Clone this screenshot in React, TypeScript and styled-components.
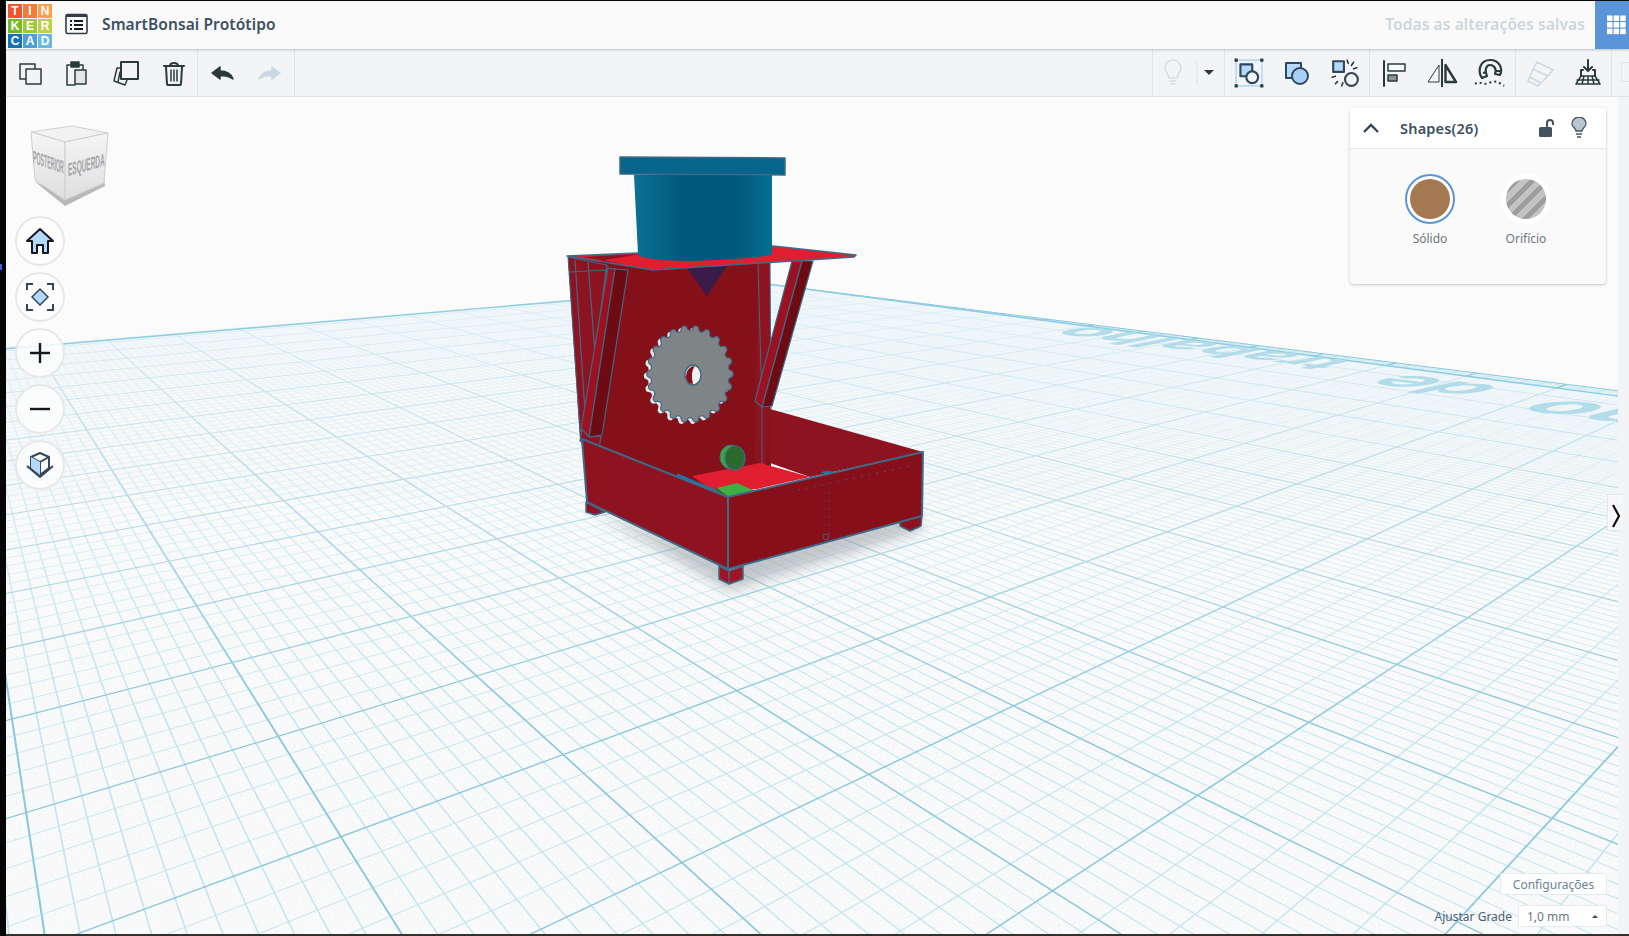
import styled, { createGlobalStyle } from "styled-components"
import type { ReactNode } from "react"

const GlobalStyle = createGlobalStyle`
    html, body {
        margin: 0;
        padding: 0;
        height: 100%;
        overflow: hidden;
        background: #000;
        font-family: "Noto Sans", "Open Sans", sans-serif;
    }
    #root {
        height: 100%;
    }
`

const Frame = styled.div`
    display: flex;
    width: 1629px;
    height: 936px;
    padding-top: 1px;
    box-sizing: border-box;
    background: #050505;
`

const LeftRail = styled.div`
    position: relative;
    flex: 0 0 6px;
`

const RailDot = styled.span`
    position: absolute;
    left: 0;
    top: 263px;
    width: 2px;
    height: 6px;
    background: #3f5fe0;
`

const Main = styled.div`
    flex: 1;
    display: flex;
    flex-direction: column;
    min-width: 0;
`

const Header = styled.header`
    flex: 0 0 48px;
    display: flex;
    align-items: center;
    background: #fafafa;
    box-shadow: 0 1px 2px rgba(120, 130, 140, 0.45);
    position: relative;
    z-index: 2;
`

const Logo = styled.div`
    display: grid;
    grid-template-columns: repeat(3, 14px);
    grid-template-rows: repeat(3, 14px);
    gap: 1px;
    margin: 2px 0 0 2px;
`

const LogoCell = styled.span<{ $bg: string }>`
    display: flex;
    align-items: center;
    justify-content: center;
    background: ${p => p.$bg};
    color: #fff;
    font: 700 12px "Liberation Sans", sans-serif;
`

const ListButton = styled.div`
    display: flex;
    margin: 0 0 2px 13px;
`

const ProjectName = styled.h1`
    margin: 0 0 3px 13px;
    font: 600 15.5px "Noto Sans", sans-serif;
    letter-spacing: 0.1px;
    color: #3c5064;
`

const SavedNote = styled.span`
    margin: 0 10px 3px auto;
    font: 600 15.5px "Noto Sans", sans-serif;
    letter-spacing: 0.1px;
    color: #cdd6de;
`

const Waffle = styled.div`
    flex: 0 0 34px;
    align-self: stretch;
    box-sizing: border-box;
    display: flex;
    align-items: center;
    padding-left: 12px;
    background: #5b95d9;
    overflow: hidden;
`

const Toolbar = styled.div`
    flex: 0 0 48px;
    display: flex;
    background: #f3f4f6;
    border-bottom: 1px solid #dfe2e6;
    box-sizing: border-box;
`

const ToolGroup = styled.div<{ $width?: number }>`
    display: flex;
    align-items: center;
    flex: 0 0 auto;
    height: 100%;
    width: ${p => (p.$width ? `${p.$width}px` : "auto")};
    border-right: 1px solid #e2e5e8;
    box-sizing: border-box;
`

const ToolButton = styled.div<{ $width?: number }>`
    flex: 0 0 ${p => p.$width ?? 48}px;
    display: flex;
    align-items: center;
    justify-content: center;
`

const ToolSpacer = styled.div`
    flex: 1;
    height: 100%;
    border-right: 1px solid #e2e5e8;
`

const CutoffButton = styled.div`
    flex: 0 0 8px;
    height: 20px;
    margin: 13px 0 0 9px;
    border: 1px solid #e3e5e8;
    border-right: 0;
    box-sizing: border-box;
    border-radius: 3px 0 0 3px;
`

const WorkArea = styled.div`
    position: relative;
    flex: 1;
    display: flex;
    min-height: 0;
`

const Canvas = styled.div`
    position: relative;
    flex: 1;
    overflow: hidden;
    background: #fbfbfb;
`

const Strip = styled.div`
    flex: 0 0 11px;
    background: #f3f4f6;
`

const BottomBar = styled.div`
    flex: 0 0 2px;
    background: #35302c;
`

const SceneSvg = styled.svg`
    display: block;
    width: 1612px;
    height: 837px;
`

const NavStack = styled.div`
    position: absolute;
    left: 9px;
    top: 119px;
    display: flex;
    flex-direction: column;
    gap: 6px;
`

const NavButton = styled.div`
    width: 50px;
    height: 50px;
    box-sizing: border-box;
    display: flex;
    align-items: center;
    justify-content: center;
    border-radius: 50%;
    border: 2px solid #e7e8ea;
    background: rgba(252, 252, 252, 0.82);
`

const ViewCube = styled.svg`
    position: absolute;
    left: 22px;
    top: 26px;
`

const ShapePanel = styled.section`
    position: absolute;
    left: 1344px;
    top: 11px;
    width: 256px;
    height: 176px;
    border-radius: 4px;
    background: #fafafa;
    box-shadow: 0 1px 3px rgba(110, 120, 135, 0.4);
    overflow: hidden;
`

const PanelHead = styled.div`
    display: flex;
    align-items: center;
    height: 40px;
    padding: 0 19px 0 13px;
    background: #fff;
    border-bottom: 1px solid #e4e6e9;
`

const PanelTitle = styled.span`
    margin-left: 21px;
    font: 600 14.5px "Noto Sans", sans-serif;
    letter-spacing: 0.2px;
    color: #3c4f63;
`

const PanelIcons = styled.div`
    margin-left: auto;
    display: flex;
    align-items: center;
    gap: 17px;
`

const ShapeOptions = styled.div`
    display: flex;
    justify-content: center;
    gap: 42px;
    padding: 25px 0 0;
`

const ShapeOption = styled.div`
    width: 54px;
    display: flex;
    flex-direction: column;
    align-items: center;
    gap: 6px;
`

const Swatch = styled.div<{ $active?: boolean }>`
    width: 50px;
    height: 50px;
    box-sizing: border-box;
    padding: 3px;
    border-radius: 50%;
    background: #fff;
    border: 2px solid ${p => (p.$active ? "#5b95d9" : "#fff")};
`

const SwatchFill = styled.div<{ $hole?: boolean }>`
    width: 100%;
    height: 100%;
    border-radius: 50%;
    background: ${p =>
        p.$hole
            ? "repeating-linear-gradient(135deg, #c3c3c3 0 6px, #9d9d9d 6px 11px)"
            : "#a47850"};
`

const SwatchLabel = styled.span`
    font: 400 12px "Noto Sans", sans-serif;
    color: #6b7681;
`

const GridControls = styled.div`
    position: absolute;
    right: 11px;
    bottom: 7px;
    display: flex;
    flex-direction: column;
    align-items: flex-end;
    gap: 10px;
`

const SettingsButton = styled.div`
    width: 107px;
    height: 22px;
    box-sizing: border-box;
    display: flex;
    align-items: center;
    justify-content: center;
    background: rgba(255, 255, 255, 0.85);
    border: 1px solid #e6eaee;
    border-radius: 2px;
    font: 400 12px "Noto Sans", sans-serif;
    color: #6f8294;
`

const SnapRow = styled.div`
    display: flex;
    align-items: center;
    gap: 6px;
`

const SnapLabel = styled.span`
    font: 400 12px "Noto Sans", sans-serif;
    color: #4a5f73;
`

const SnapSelect = styled.div`
    width: 89px;
    height: 22px;
    box-sizing: border-box;
    display: flex;
    align-items: center;
    justify-content: space-between;
    padding: 0 8px;
    background: #fff;
    border: 1px solid #e6eaee;
    border-radius: 2px;
    font: 400 12px "Noto Sans", sans-serif;
    color: #6b7681;
`

const CaretUp = styled.span`
    width: 0;
    height: 0;
    border-left: 3px solid transparent;
    border-right: 3px solid transparent;
    border-bottom: 3px solid #3d4650;
`

const PanelHandle = styled.div`
    position: absolute;
    right: 6px;
    top: 397px;
    width: 16px;
    height: 37px;
    box-sizing: border-box;
    padding-top: 6px;
    display: flex;
    align-items: center;
    justify-content: center;
    background: #f6f7f8;
    border: 1px solid #e5e7ea;
    border-right: 0;
`

// workplane perspective, all in page pixels
const CORNER = { x: 767, y: 285 }
const VP_A = { x: 2150, y: 170 }
const VP_B = { x: -70, y: 180 }
const STEP_U = 0.0231
const STEP_V = 0.0297
const OFFSET_V = 0.45

type Point = { x: number; y: number }

const project = (u: number, v: number): Point => {
    const a = STEP_U * u
    const b = STEP_V * v
    const w = 1 - a - b
    return {
        x: (CORNER.x - a * VP_A.x - b * VP_B.x) / w,
        y: (CORNER.y - a * VP_A.y - b * VP_B.y) / w,
    }
}

type GridLine = { d: string; major: boolean; width: number }

// the texture is foreshortened: steep lines come out thicker than flat ones
const makeLine = (from: Point, to: Point, major: boolean): GridLine => {
    const dx = to.x - from.x
    const dy = to.y - from.y
    const steep = Math.abs(dy) / Math.hypot(dx, dy)
    return {
        d: `M${from.x.toFixed(1)} ${from.y.toFixed(1)}L${to.x.toFixed(1)} ${to.y.toFixed(1)}`,
        major,
        width: major ? 0.9 + 1.1 * steep : 0.6 + 1.1 * steep,
    }
}

const buildGrid = () => {
    const lines: GridLine[] = []
    for (let i = 0; i <= 200; i++) {
        const u = i / 10
        const vEnd = (0.985 - STEP_U * u) / STEP_V
        lines.push(makeLine(project(u, 0), project(u, vEnd), i % 10 === 0))
    }
    for (let i = -2; i <= 165; i++) {
        const v = OFFSET_V + i / 5
        const uEnd = (0.985 - STEP_V * v) / STEP_U
        lines.push(makeLine(project(0, v), project(uEnd, v), i % 5 === 0))
    }
    return lines.sort((a, b) => Number(a.major) - Number(b.major))
}

const gridLines = buildGrid()

const buildGear = (cx: number, cy: number) => {
    const teeth = 22
    const points: string[] = []
    for (let i = 0; i < 480; i++) {
        const t = (i / 480) * Math.PI * 2
        const r = 1 + 0.055 * Math.tanh(1.6 * Math.cos(t * teeth))
        const x = cx + 41 * r * Math.cos(t)
        const y = cy + 46 * r * Math.sin(t)
        points.push(`${x.toFixed(1)},${y.toFixed(1)}`)
    }
    return points.join(" ")
}

const OUTLINE = "#3f6987"

const Workplane = () => (
    <g>
        <defs>
            <linearGradient id="planeFade" x1="0" y1="285" x2="0" y2="720" gradientUnits="userSpaceOnUse">
                <stop offset="0" stopColor="#fbfbfb" stopOpacity="0.8" />
                <stop offset="0.4" stopColor="#fbfbfb" stopOpacity="0.5" />
                <stop offset="1" stopColor="#fbfbfb" stopOpacity="0" />
            </linearGradient>
            <filter id="speckle" x="0" y="0" width="100%" height="100%">
                <feTurbulence type="fractalNoise" baseFrequency="0.8" numOctaves="2" seed="4" />
                <feColorMatrix values="0 0 0 0 1  0 0 0 0 1  0 0 0 0 1  0 0 0 2.4 -0.9" />
            </filter>
        </defs>
        <polygon points="767,285 1640,400 1640,960 -20,960 -20,350" fill="#f5f6f7" />
        <rect x="6" y="500" width="1612" height="435" filter="url(#speckle)" />
        {gridLines.map((line, i) => (
            <path key={i} d={line.d} stroke={line.major ? "#88c7dd" : "#c2e5f0"} strokeWidth={line.width} fill="none" />
        ))}
        <polygon points="767,285 1640,400 1640,720 -20,720 -20,350" fill="url(#planeFade)" />
        <path d="M-20 352L767 285L1640 400" stroke="#8ccde2" strokeWidth="1.4" fill="none" />
        <g fill="#b3dcea" fontFamily="Inter, sans-serif" fontWeight="700" fontSize="40">
            <text transform="matrix(-1.68 -0.22 1.5 -0.3 1083 327)" textAnchor="end">trabalho</text>
            <text transform="matrix(-2.1 -0.27 1.8 -0.38 1403 375)" textAnchor="end">de</text>
            <text transform="matrix(-2.5 -0.32 2 -0.46 1556 400)" textAnchor="end">Plano</text>
        </g>
    </g>
)

const Model = () => (
    <g stroke={OUTLINE} strokeLinejoin="round">
        <defs>
            <linearGradient id="cup" x1="0" x2="1" y1="0" y2="0">
                <stop offset="0" stopColor="#0b7195" />
                <stop offset="0.35" stopColor="#00597c" />
                <stop offset="0.75" stopColor="#005a7d" />
                <stop offset="1" stopColor="#066e93" />
            </linearGradient>
            <filter id="soft" x="-20%" y="-50%" width="140%" height="200%">
                <feGaussianBlur stdDeviation="7" />
            </filter>
        </defs>
        <polygon points="590,510 730,592 925,530 910,515 730,560" fill="#8b9296" opacity="0.5" stroke="none" filter="url(#soft)" />

        {/* feet */}
        <polygon points="586,503 605,513 595,516 586,513" fill="#8e121f" strokeWidth="1.5" />
        <polygon points="900,522 922,516 921,527 910,532 900,527" fill="#8e121f" strokeWidth="1.5" />
        <polygon points="719,567 729,572 743,567 743,580 729,585 719,580" fill="#a01524" strokeWidth="1.5" />
        <path d="M729 572V585" fill="none" strokeWidth="1.5" />

        {/* back wall and struts */}
        <polygon points="568,258 770,258 771,485 700,505 590,470 580,440" fill="#84101a" stroke="none" />
        <polygon points="758,264 770,262 770,410 766,466 755,462" fill="#8e1320" stroke="none" />
        <polygon points="568,258 607,266 595,354 583,427 580,433" fill="#8e1320" />
        <path d="M575 261L585 413M588 263L595 354M607 266L595 354L583 425M569 273L606 271" fill="none" strokeWidth="1.2" />
        <polygon points="608,269 615,270 589,438 581,430" fill="#9c1020" strokeWidth="1.2" />
        <polygon points="615,270 628,271 602,436 589,438" fill="#6e0a12" strokeWidth="1.2" />
        <polygon points="582,430 589,438 601,437 599,450 580,442" fill="#8e1320" strokeWidth="1.2" />
        <path d="M758 265L762 407V470M770 262L771 410" fill="none" strokeWidth="1" />
        <polygon points="792,262 802,262 762,408 755,402" fill="#9c1020" strokeWidth="1.2" />
        <polygon points="802,262 813,262 772,407 762,408" fill="#6e0a12" strokeWidth="1.2" />
        <polygon points="687,269 727,267 707,297" fill="#3c1a4a" stroke="none" />

        {/* top cup and plate */}
        <polygon points="567,257 638,254 773,247 856,256 854,258 653,271" fill="#e01e30" strokeWidth="1.6" />
        <path d="M583 258L640 255L600 262L625 265Z" fill="#8e1320" stroke="none" />
        <path d="M634 176H772V255C772 259 700 262 690 262C660 262 638 259 638 255Z" fill="url(#cup)" stroke="none" />
        <polygon points="620,158 785,159 785,176 620,175" fill="#07648a" strokeWidth="1.5" />

        {/* gear */}
        <polygon points={buildGear(687, 377)} fill="#e4e4e4" stroke="none" />
        <polygon points={buildGear(690, 375)} fill="#7f8486" strokeWidth="1.2" />
        <ellipse cx="693" cy="376" rx="8" ry="10" fill="#f2f2f2" strokeWidth="1.5" />
        <path d="M686 379C686 370 691 367 695 367C692 371 691 376 693 385C689 385 687 382 686 379Z" fill="#84101a" stroke="none" />

        {/* tray */}
        <polygon points="770,410 923,453 810,478 770,464" fill="#8e1320" stroke="none" />
        <polygon points="692,477 760,464 810,478 757,490 716,494" fill="#e01e30" stroke="none" />
        <path d="M677 476L717 493" stroke="#1878ad" strokeWidth="3.5" fill="none" />
        <polygon points="717,489 737,484 755,492 728,498" fill="#3fae45" stroke="none" />
        <polygon points="717,489 728,498 716,495" fill="#2a7034" stroke="none" />
        <ellipse cx="731" cy="458" rx="11" ry="12" fill="#3ca83c" strokeWidth="1" />
        <ellipse cx="735" cy="459" rx="10" ry="12" fill="#2a6a2e" strokeWidth="1.2" />
        <path d="M821 474C823 471 832 471 834 474Z" fill="#1878ad" stroke="none" />
        <polygon points="582,440 728,498 728,570 587,503" fill="#8e121f" strokeWidth="2" />
        <polygon points="728,498 923,453 922,517 728,570" fill="#870f19" strokeWidth="2" />
        <path d="M798 491L915 466M829 493V535" stroke={OUTLINE} strokeWidth="0.7" strokeDasharray="2 6" fill="none" />
        <circle cx="826" cy="538" r="3" fill="none" strokeWidth="0.8" />
    </g>
)

const ToolIcon = ({ children, size = 28 }: { children: ReactNode; size?: number }) => (
    <svg width={size} height={size} viewBox="0 0 28 28" fill="none" stroke="#2b3b3d" strokeWidth="1.5" strokeLinejoin="round" strokeLinecap="round">
        {children}
    </svg>
)

const FAINT = "#d5dde4"
const ACCENT = "#b3d9fb"

const logoCells = [
    ["T", "#f0562d"],
    ["I", "#f57b3a"],
    ["N", "#f9a04e"],
    ["K", "#76b82a"],
    ["E", "#9cc83a"],
    ["R", "#bcd147"],
    ["C", "#1473b8"],
    ["A", "#4b9fd6"],
    ["D", "#6cb8e2"],
]

export default function App() {
    return (
        <>
            <GlobalStyle />
            <Frame>
                <LeftRail>
                    <RailDot />
                </LeftRail>
                <Main>
                    <Header>
                        <Logo>
                            {logoCells.map(([letter, color]) => (
                                <LogoCell key={letter} $bg={color}>{letter}</LogoCell>
                            ))}
                        </Logo>
                        <ListButton>
                            <svg width="24" height="22" viewBox="0 0 24 22" fill="none">
                                <rect x="1" y="1.5" width="21" height="19" rx="1.5" stroke="#333d47" strokeWidth="1.6" />
                                <path d="M1 3H22" stroke="#333d47" strokeWidth="2" />
                                <path d="M5 8h2M9 8h9M5 12h2M9 12h9M5 16h2M9 16h9" stroke="#15191d" strokeWidth="2" />
                            </svg>
                        </ListButton>
                        <ProjectName>SmartBonsai Protótipo</ProjectName>
                        <SavedNote>Todas as alterações salvas</SavedNote>
                        <Waffle>
                            <svg width="30" height="26" viewBox="0 0 30 26" fill="#fff">
                                {[0, 9, 18].map(y =>
                                    [0, 9, 18].map(x => <rect key={`${x}-${y}`} x={x} y={y} width="7.5" height="7.5" />),
                                )}
                            </svg>
                        </Waffle>
                    </Header>
                    <Toolbar>
                        <ToolGroup $width={192}>
                            <ToolButton>
                                <ToolIcon>
                                    <rect x="4" y="5" width="15" height="15" />
                                    <rect x="10" y="10" width="15" height="15" fill="#f3f4f6" />
                                </ToolIcon>
                            </ToolButton>
                            <ToolButton>
                                <ToolIcon>
                                    <g transform="translate(-2 0)">
                                        <path d="M9 6H5V26H13M17 6H21V11" />
                                        <rect x="9" y="3" width="8" height="5" fill="#2b3b3d" />
                                        <rect x="13" y="11" width="11" height="14" fill="#e2e5e8" />
                                    </g>
                                </ToolIcon>
                            </ToolButton>
                            <ToolButton>
                                <ToolIcon>
                                    <path d="M8 9H5L2 22L13 26L15 21" />
                                    <path d="M8 13L6 23" />
                                    <rect x="9" y="3" width="17" height="17" strokeWidth="2" fill="#f3f4f6" />
                                </ToolIcon>
                            </ToolButton>
                            <ToolButton>
                                <ToolIcon>
                                    <path d="M4 7H24M10 7C10 3 18 3 18 7M6 8L7 25C7 26 8 26 9 26H19C20 26 21 26 21 25L22 8" strokeWidth="2" />
                                    <path d="M11 11V22M14 11V22M17 11V22" />
                                </ToolIcon>
                            </ToolButton>
                        </ToolGroup>
                        <ToolGroup $width={97}>
                            <ToolButton>
                                <ToolIcon>
                                    <path d="M4 14L12 8V12C18 12 23 14 25 20C21 17 17 16.500 12 16.500V20Z" fill="#2b3b3d" />
                                </ToolIcon>
                            </ToolButton>
                            <ToolButton>
                                <ToolIcon>
                                    <path d="M24 14L16 8V12C10 12 5 14 3 20C7 17 11 16.500 16 16.500V20Z" fill="#ccd8e2" stroke="#ccd8e2" />
                                </ToolIcon>
                            </ToolButton>
                        </ToolGroup>
                        <ToolSpacer />
                        <ToolGroup $width={72}>
                            <ToolButton $width={43}>
                                <ToolIcon>
                                    <g transform="translate(-2 0)">
                                        <path d="M10 19C10 15 6 13 6 9A8 8 0 0 1 22 9C22 13 18 15 18 19Z" stroke={FAINT} />
                                        <path d="M11 22H17M12 25H16" stroke={FAINT} />
                                    </g>
                                </ToolIcon>
                            </ToolButton>
                            <svg width="22" height="28" viewBox="0 0 22 28">
                                <path d="M1 3V25" stroke="#dde1e5" />
                                <path d="M8 11H18L13 16Z" fill="#2b3b3d" />
                            </svg>
                        </ToolGroup>
                        <ToolGroup $width={145}>
                            <ToolButton>
                                <ToolIcon size={30}>
                                    <path d="M2 2H26V26H2Z" stroke={ACCENT} strokeLinecap="butt" />
                                    <path d="M1 1h2v2H1zM25 1h2v2h-2zM1 25h2v2H1zM25 25h2v2h-2z" fill="#2b3b3d" strokeWidth="1" />
                                    <rect x="6" y="6" width="11" height="11" fill={ACCENT} strokeWidth="2" stroke="#33475c" />
                                    <circle cx="17" cy="18" r="5.500" fill="#f3f4f6" strokeWidth="2" stroke="#33475c" />
                                </ToolIcon>
                            </ToolButton>
                            <ToolButton>
                                <ToolIcon>
                                    <rect x="3" y="4" width="15" height="15" fill={ACCENT} strokeWidth="2" stroke="#33475c" />
                                    <circle cx="17" cy="17" r="8" fill="#a8d0f7" strokeWidth="2" stroke="#33475c" />
                                </ToolIcon>
                            </ToolButton>
                            <ToolButton>
                                <ToolIcon size={30}>
                                    <rect x="3" y="3" width="10" height="10" fill={ACCENT} strokeWidth="2" stroke="#33475c" />
                                    <circle cx="20" cy="20" r="6" fill="#f3f4f6" strokeWidth="2" stroke="#33475c" />
                                    <path d="M16 2L17 5M22 4L20 7M25 9L22 10M2 18L5 17M5 24L7 22M11 26L12 23" strokeWidth="1.5" />
                                </ToolIcon>
                            </ToolButton>
                        </ToolGroup>
                        <ToolGroup $width={146}>
                            <ToolButton>
                                <ToolIcon>
                                    <path d="M4 2V27" strokeWidth="2" />
                                    <rect x="8" y="5" width="17" height="7" fill="#fafafa" />
                                    <rect x="8" y="16" width="9" height="6" fill="#8b9397" />
                                </ToolIcon>
                            </ToolButton>
                            <ToolButton>
                                <svg width="32" height="30" viewBox="0 0 32 30" fill="none" stroke="#2b3b3d" strokeLinejoin="round">
                                    <path d="M13 7V24H2Z" fill="#fafafa" />
                                    <path d="M16 1V29" strokeWidth="2" />
                                    <path d="M19.500 7V24H30Z" fill="#f3f4f6" strokeWidth="2.400" />
                                </svg>
                            </ToolButton>
                            <ToolButton>
                                <svg width="32" height="30" viewBox="0 0 32 30" fill="none" stroke="#2b3b3d" strokeLinejoin="round">
                                    <path d="M8 20C3 13 6 2 16 2C26 2 29 11 26 17L21 16C23 11 20 7 16 7C12 7 10 13 13 18Z" strokeWidth="2.200" />
                                    <path d="M9 15L13 14M21 13L26 13" strokeWidth="2" />
                                    <path d="M1 26C6 22 9 28 15 25C20 22 25 24 30 28" strokeWidth="2" strokeDasharray="2 3" />
                                </svg>
                            </ToolButton>
                        </ToolGroup>
                        <ToolGroup $width={96}>
                            <ToolButton>
                                <ToolIcon>
                                    <path d="M11 3L27 11L22 17L7 10ZM7 10L2 22L12 27L22 17M4 18L15 24" stroke="#ccd8e2" />
                                </ToolIcon>
                            </ToolButton>
                            <ToolButton>
                                <ToolIcon>
                                    <path d="M14 1V11M10 8L14 12L18 8" strokeWidth="2" />
                                    <path d="M9 11H7V17M19 11H21V17" strokeWidth="2" />
                                    <path d="M7 17H21L26 25H2ZM3 21H25M10 17L8 25M18 17L20 25M14 17V25" />
                                </ToolIcon>
                            </ToolButton>
                        </ToolGroup>
                        <CutoffButton />
                    </Toolbar>
                    <WorkArea>
                        <Canvas>
                            <SceneSvg viewBox="6 98 1612 837">
                                <Workplane />
                                <Model />
                            </SceneSvg>
                            <ViewCube width="86" height="90" viewBox="0 0 86 90">
                                <defs>
                                    <linearGradient id="cubeFace" x1="0" y1="0" x2="0" y2="1">
                                        <stop offset="0" stopColor="#f5f5f5" />
                                        <stop offset="1" stopColor="#dedede" />
                                    </linearGradient>
                                </defs>
                                <polygon points="6,58 37,83 77,63 76,55 37,74" fill="#b8b8b8" />
                                <polygon points="3,9 44,3 80,10 37,19" fill="#f2f2f2" stroke="#d0d0d0" />
                                <polygon points="3,9 37,19 37,77 7,57" fill="url(#cubeFace)" stroke="#cfcfcf" />
                                <polygon points="37,19 80,10 76,60 37,77" fill="url(#cubeFace)" stroke="#cfcfcf" />
                                <g fill="#a4a4a8" fontWeight="700" fontFamily="'Liberation Sans Narrow', 'Liberation Sans', sans-serif" fontSize="9">
                                    <text transform="matrix(0.58 0.2 0 2 5 40)">POSTERIOR</text>
                                    <text transform="matrix(0.72 -0.2 0 2 40 53)">ESQUERDA</text>
                                </g>
                            </ViewCube>
                            <NavStack>
                                <NavButton>
                                    <svg width="28" height="28" viewBox="0 0 28 28" stroke="#15191d" strokeWidth="2" strokeLinejoin="round" fill={ACCENT}>
                                        <path d="M14 2L27 14H22V26H17V18H11V26H6V14H1Z" />
                                    </svg>
                                </NavButton>
                                <NavButton>
                                    <svg width="28" height="28" viewBox="0 0 28 28" fill="none" stroke="#33475c" strokeWidth="2">
                                        <path d="M1 7V1H7M21 1H27V7M27 21V27H21M7 27H1V21" />
                                        <path d="M14 6L22 14L14 22L6 14Z" fill={ACCENT} strokeWidth="1.500" />
                                    </svg>
                                </NavButton>
                                <NavButton>
                                    <svg width="22" height="22" viewBox="0 0 22 22" stroke="#15191d" strokeWidth="2.400">
                                        <path d="M11 1V21M1 11H21" />
                                    </svg>
                                </NavButton>
                                <NavButton>
                                    <svg width="22" height="22" viewBox="0 0 22 22" stroke="#15191d" strokeWidth="2.400">
                                        <path d="M1 11H21" />
                                    </svg>
                                </NavButton>
                                <NavButton>
                                    <svg width="28" height="28" viewBox="0 0 28 28" fill="none" stroke="#33475c" strokeWidth="2" strokeLinejoin="round">
                                        <path d="M14 2L23 6V17L14 24L5 17V6Z" fill="#fafafa" />
                                        <path d="M5 6L14 11L23 6M14 11V24" />
                                        <path d="M5 6L14 11V24L5 17Z" fill={ACCENT} strokeWidth="0" />
                                        <path d="M1 15L14 26L27 15" />
                                    </svg>
                                </NavButton>
                            </NavStack>
                            <ShapePanel>
                                <PanelHead>
                                    <svg width="16" height="10" viewBox="0 0 16 10" fill="none" stroke="#33475c" strokeWidth="2.400">
                                        <path d="M1 9L8 2L15 9" />
                                    </svg>
                                    <PanelTitle>Shapes(26)</PanelTitle>
                                    <PanelIcons>
                                        <svg width="16" height="20" viewBox="0 0 16 20" fill="none">
                                            <path d="M9 9V5C9 1 15 1 15 5V7" stroke="#44525f" strokeWidth="2" />
                                            <rect x="1" y="9" width="13" height="10" rx="1.500" fill="#44525f" />
                                        </svg>
                                        <svg width="16" height="22" viewBox="0 0 16 22" fill="#b8c6cf" stroke="#44525f" strokeWidth="1.300">
                                            <path d="M5 14C5 11 1 10 1 7A7 7 0 0 1 15 7C15 10 11 11 11 14Z" />
                                            <path d="M5 17H11M6 20H10" fill="none" />
                                        </svg>
                                    </PanelIcons>
                                </PanelHead>
                                <ShapeOptions>
                                    <ShapeOption>
                                        <Swatch $active>
                                            <SwatchFill />
                                        </Swatch>
                                        <SwatchLabel>Sólido</SwatchLabel>
                                    </ShapeOption>
                                    <ShapeOption>
                                        <Swatch>
                                            <SwatchFill $hole />
                                        </Swatch>
                                        <SwatchLabel>Orifício</SwatchLabel>
                                    </ShapeOption>
                                </ShapeOptions>
                            </ShapePanel>
                            <GridControls>
                                <SettingsButton>Configurações</SettingsButton>
                                <SnapRow>
                                    <SnapLabel>Ajustar Grade</SnapLabel>
                                    <SnapSelect>
                                        1,0 mm
                                        <CaretUp />
                                    </SnapSelect>
                                </SnapRow>
                            </GridControls>
                        </Canvas>
                        <Strip />
                        <PanelHandle>
                            <svg width="10" height="24" viewBox="0 0 10 24" fill="none" stroke="#111" strokeWidth="2.200">
                                <path d="M2 1L8 12L2 23" />
                            </svg>
                        </PanelHandle>
                    </WorkArea>
                    <BottomBar />
                </Main>
            </Frame>
        </>
    )
}
